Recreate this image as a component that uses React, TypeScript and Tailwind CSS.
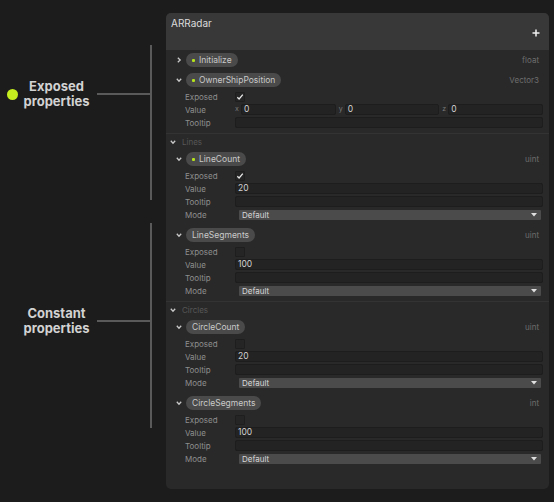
import React from "react";

type Prop = {
  name: string;
  type: string;
  exposed: boolean;
  collapsed?: boolean;
  vector?: boolean;
  value?: string;
};

type Section = {
  title: string | null;
  props: Prop[];
};

const sections: Section[] = [
  {
    title: null,
    props: [
      { name: "Initialize", type: "float", exposed: true, collapsed: true },
      { name: "OwnerShipPosition", type: "Vector3", exposed: true, vector: true },
    ],
  },
  {
    title: "Lines",
    props: [
      { name: "LineCount", type: "uint", exposed: true, value: "20" },
      { name: "LineSegments", type: "uint", exposed: false, value: "100" },
    ],
  },
  {
    title: "Circles",
    props: [
      { name: "CircleCount", type: "uint", exposed: false, value: "20" },
      { name: "CircleSegments", type: "int", exposed: false, value: "100" },
    ],
  },
];

function Chevron({ open }: { open: boolean }) {
  return (
    <svg width="6" height="6" viewBox="0 0 6 6" className="shrink-0">
      {open ? (
        <path d="M0.8 1.8 L3 4.2 L5.2 1.8" fill="none" stroke="#c8c8c8" strokeWidth="1.3" />
      ) : (
        <path d="M1.8 0.8 L4.2 3 L1.8 5.2" fill="none" stroke="#c8c8c8" strokeWidth="1.3" />
      )}
    </svg>
  );
}

function Field({ children }: { children?: React.ReactNode }) {
  return (
    <div className="flex h-[11px] flex-1 items-center rounded-[2px] border border-[#1d1d1d] bg-[#232323] pl-[2px] text-[8.5px] text-[#d2d2d2]">
      {children}
    </div>
  );
}

function SubRow({ label, children }: { label: string; children: React.ReactNode }) {
  return (
    <div className="flex h-[13px] items-center">
      <div className="w-[69px] shrink-0 pl-[19px] text-[8px] text-[#8e8e8e]">{label}</div>
      <div className="flex flex-1 items-center pr-[6px]">{children}</div>
    </div>
  );
}

function Checkbox({ checked }: { checked: boolean }) {
  return (
    <div className="flex h-[10px] w-[10px] items-center justify-center rounded-[1px] border border-[#1e1e1e] bg-[#252525]">
      {checked && (
        <svg width="8" height="8" viewBox="0 0 8 8">
          <path d="M1.3 4.2 L3.1 6 L6.8 1.6" fill="none" stroke="#e6e6e6" strokeWidth="1.3" />
        </svg>
      )}
    </div>
  );
}

function Dropdown() {
  return (
    <div className="ml-[4px] mr-[2px] flex h-[10px] flex-1 items-center justify-between rounded-[1px] bg-[#4b4b4b] pl-[3px] pr-[4px] text-[8px] text-[#d8d8d8]">
      <span>Default</span>
      <svg width="6" height="4" viewBox="0 0 6 4">
        <path d="M0 0 L6 0 L3 3.5 Z" fill="#e0e0e0" />
      </svg>
    </div>
  );
}

function PropertyBlock({ prop }: { prop: Prop }) {
  return (
    <div className={prop.collapsed ? "" : "mb-[4px]"}>
      <div className="flex h-[20px] items-center pl-[10px] pr-[10px]">
        <Chevron open={!prop.collapsed} />
        <div className="ml-[4px] flex h-[14px] items-center rounded-full bg-[#4a4a4a] px-[6px] text-[8.5px] text-[#c9c9c9]">
          {prop.exposed && <span className="mr-[4px] h-[3px] w-[3px] rounded-[1px] bg-[#b4e21c]" />}
          {prop.name}
        </div>
        <div className="ml-auto text-[8px] text-[#6e6e6e]">{prop.type}</div>
      </div>
      {!prop.collapsed && (
        <>
          <SubRow label="Exposed">
            <Checkbox checked={prop.exposed} />
          </SubRow>
          <SubRow label="Value">
            {prop.vector ? (
              <div className="flex flex-1 gap-[3px]">
                {["x", "y", "z"].map((axis) => (
                  <div key={axis} className="flex flex-1 items-center">
                    <span className="w-[6px] shrink-0 text-[7px] text-[#7a7a7a]">{axis}</span>
                    <Field>0</Field>
                  </div>
                ))}
              </div>
            ) : (
              <Field>{prop.value}</Field>
            )}
          </SubRow>
          <SubRow label="Tooltip">
            <Field />
          </SubRow>
          {!prop.vector && (
            <SubRow label="Mode">
              <Dropdown />
            </SubRow>
          )}
        </>
      )}
    </div>
  );
}

export default function App() {
  return (
    <main className="flex h-[502px] w-[554px] bg-[#1c1c1c] font-['Inter','Liberation_Sans',sans-serif]">
      {/* callouts on the left */}
      <div className="w-[166px] shrink-0">
        <div className="mt-[45px] flex h-[155px]">
          <div className="flex-1 pt-[34px]">
            <div className="flex h-[30px] items-center">
              <span className="ml-[7px] h-[11px] w-[11px] rounded-full bg-[#c5ef1f]" />
              <div className="w-[77px] text-center text-[13px] font-bold leading-[15px] text-[#d2d2d2]">
                Exposed
                <br />
                properties
              </div>
              <div className="ml-[2px] h-[2px] flex-1 bg-[#5a5a5a]" />
            </div>
          </div>
          <div className="w-[2px] bg-[#5a5a5a] mr-[14px]" />
        </div>
        <div className="mt-[23px] flex h-[205px]">
          <div className="flex-1 pt-[83px]">
            <div className="flex h-[30px] items-center">
              <div className="ml-[18px] w-[77px] text-center text-[13px] font-bold leading-[15px] text-[#d2d2d2]">
                Constant
                <br />
                properties
              </div>
              <div className="ml-[2px] h-[2px] flex-1 bg-[#5a5a5a]" />
            </div>
          </div>
          <div className="w-[2px] bg-[#5a5a5a] mr-[14px]" />
        </div>
      </div>

      {/* inspector panel */}
      <div className="mt-[13px] flex h-[476px] w-[383px] flex-col overflow-hidden rounded-[5px] bg-[#292929]">
        <div className="flex h-[37px] shrink-0 items-start justify-between bg-[#383838] pl-[5px] pr-[9px] pt-[4px]">
          <span className="text-[10px] leading-[12px] text-[#dcdcdc]">ARRadar</span>
          <svg width="8" height="8" viewBox="0 0 8 8" className="mt-[12px]">
            <path d="M4 0.5 V7.5 M0.5 4 H7.5" stroke="#f0f0f0" strokeWidth="1.5" />
          </svg>
        </div>
        {sections.map((section, i) => (
          <div key={i} className={i > 0 ? "border-t border-[#333333]" : ""}>
            {section.title && (
              <div className="flex h-[15px] items-center pl-[4px]">
                <Chevron open />
                <span className="ml-[6px] text-[8px] text-[#575757]">{section.title}</span>
              </div>
            )}
            {section.props.map((p) => (
              <PropertyBlock key={p.name} prop={p} />
            ))}
          </div>
        ))}
      </div>
    </main>
  );
}
